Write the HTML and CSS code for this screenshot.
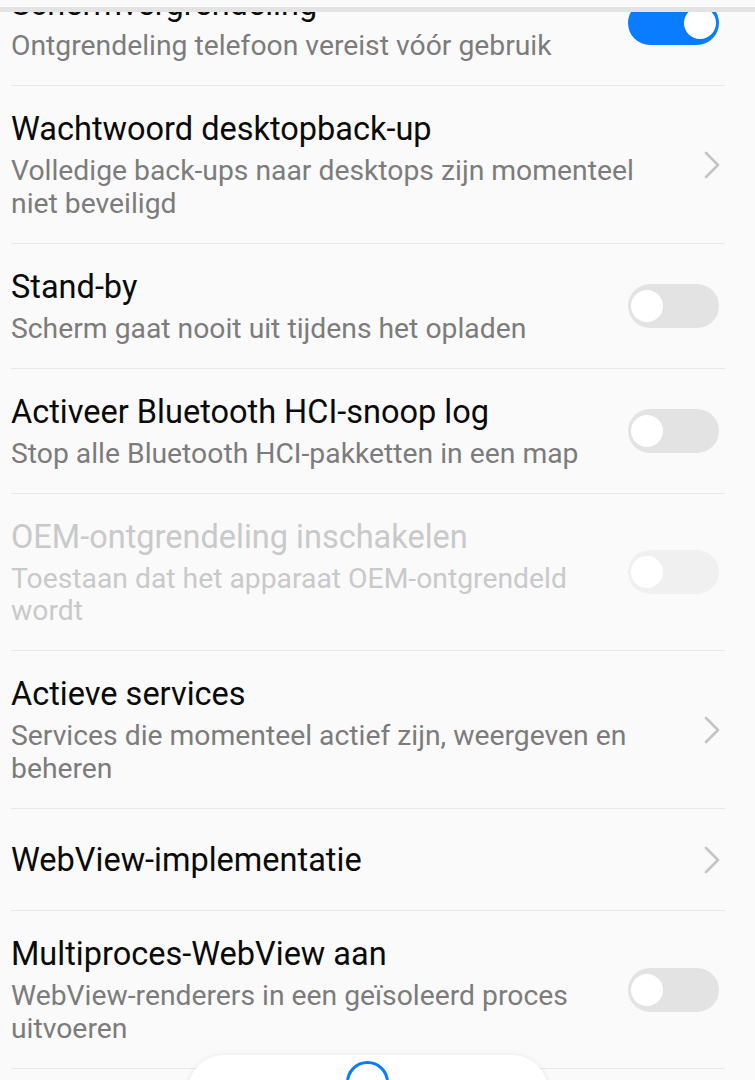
FILE: index.html
```html
<!DOCTYPE html>
<html lang="nl">
<head>
<meta charset="utf-8">
<title>Ontwikkelaarsopties</title>
<link rel="stylesheet" href="styles.css">
</head>
<body>
<div class="topbar"></div>
<div class="list">
  <div class="row">
    <div class="text">
      <div class="title">Schermvergrendeling</div>
      <div class="summary">Ontgrendeling telefoon vereist vóór gebruik</div>
    </div>
    <span class="switch on"></span>
  </div>
  <div class="row">
    <div class="text">
      <div class="title">Wachtwoord desktopback-up</div>
      <div class="summary">Volledige back-ups naar desktops zijn momenteel niet beveiligd</div>
    </div>
    <svg class="chev" width="16" height="28" viewBox="0 0 16 28"><polyline points="2,2 14,14 2,26" fill="none" stroke="#c4c4c4" stroke-width="2.6" stroke-linecap="round" stroke-linejoin="round"/></svg>
  </div>
  <div class="row">
    <div class="text">
      <div class="title">Stand-by</div>
      <div class="summary">Scherm gaat nooit uit tijdens het opladen</div>
    </div>
    <span class="switch"></span>
  </div>
  <div class="row">
    <div class="text">
      <div class="title">Activeer Bluetooth HCI-snoop log</div>
      <div class="summary">Stop alle Bluetooth HCI-pakketten in een map</div>
    </div>
    <span class="switch"></span>
  </div>
  <div class="row disabled">
    <div class="text">
      <div class="title">OEM-ontgrendeling inschakelen</div>
      <div class="summary">Toestaan dat het apparaat OEM-ontgrendeld wordt</div>
    </div>
    <span class="switch"></span>
  </div>
  <div class="row">
    <div class="text">
      <div class="title">Actieve services</div>
      <div class="summary">Services die momenteel actief zijn, weergeven en beheren</div>
    </div>
    <svg class="chev" width="16" height="28" viewBox="0 0 16 28"><polyline points="2,2 14,14 2,26" fill="none" stroke="#c4c4c4" stroke-width="2.6" stroke-linecap="round" stroke-linejoin="round"/></svg>
  </div>
  <div class="row single">
    <div class="text">
      <div class="title">WebView-implementatie</div>
    </div>
    <svg class="chev" width="16" height="28" viewBox="0 0 16 28"><polyline points="2,2 14,14 2,26" fill="none" stroke="#c4c4c4" stroke-width="2.6" stroke-linecap="round" stroke-linejoin="round"/></svg>
  </div>
  <div class="row">
    <div class="text">
      <div class="title">Multiproces-WebView aan</div>
      <div class="summary">WebView-renderers in een geïsoleerd proces uitvoeren</div>
    </div>
    <span class="switch"></span>
  </div>
</div>
<div class="dock"><span class="ring"></span></div>
</body>
</html>
```
FILE: styles.css
```css
html, body {
  margin: 0;
  padding: 0;
  background: #fafafa;
  height: 1080px;
  overflow: hidden;
  font-family: Roboto, "Noto Sans", "Liberation Sans", sans-serif;
}

.topbar {
  position: absolute;
  top: 0;
  left: 0;
  right: 0;
  height: 7px;
  background: #fafafa;
  border-bottom: 5px solid #e3e3e3;
  z-index: 2;
}

.list {
  margin: -39px 30px 0 11px;
}

.row {
  display: flex;
  align-items: center;
  padding: 23px 0 22.5px;
  border-bottom: 1px solid #e8e8e8;
}

.row.single {
  min-height: 56px;
}

.text {
  flex: 0 0 627px;
}

.title {
  font-size: 32.5px;
  line-height: 40px;
  color: #0a0a0a;
  margin-bottom: 6px;
}

.row.single .title {
  margin-bottom: 0;
}

.summary {
  font-size: 28.3px;
  line-height: 32.5px;
  color: #7c7c7c;
}

.disabled .title,
.disabled .summary {
  color: #c9c9c9;
}

.switch {
  flex: none;
  position: relative;
  width: 91px;
  height: 44px;
  border-radius: 22px;
  background: #e3e3e3;
  margin-left: -10px;
  margin-right: 6px;
}

.switch::after {
  content: "";
  position: absolute;
  top: 6px;
  left: 3px;
  width: 32px;
  height: 32px;
  border-radius: 50%;
  background: #ffffff;
}

.switch.on {
  background: #0a7cff;
}

.switch.on::after {
  left: auto;
  right: 3px;
}

.disabled .switch {
  background: #f0f0f0;
}

.chev {
  flex: none;
  margin-left: auto;
  margin-right: 5px;
}

.dock {
  position: absolute;
  left: 188px;
  top: 1055px;
  width: 360px;
  height: 80px;
  background: #ffffff;
  border-radius: 36px;
  box-shadow: 0 0 6px rgba(0, 0, 0, 0.08);
  z-index: 3;
}

.ring {
  position: absolute;
  left: 158px;
  top: 6px;
  width: 37px;
  height: 37px;
  border: 3px solid #0a7cff;
  border-radius: 50%;
}
```
